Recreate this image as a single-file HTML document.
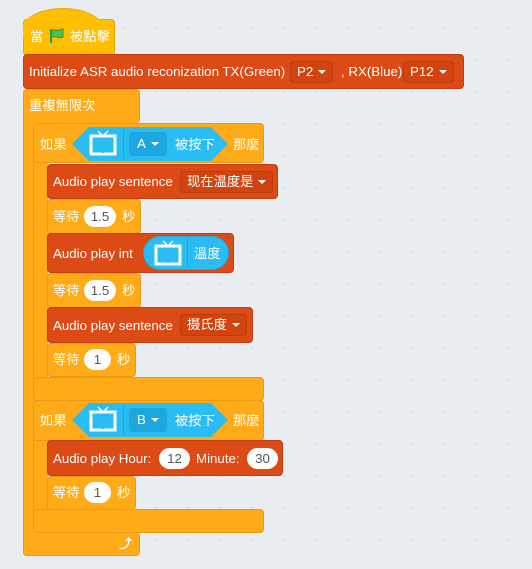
<!DOCTYPE html>
<html><head><meta charset="utf-8"><style>
*{margin:0;padding:0;box-sizing:border-box}
body{width:532px;height:569px;overflow:hidden;background:#e9edf2;background-image:radial-gradient(#d8dde4 1px,transparent 1.2px);background-size:32px 32px;background-position:12px 12px;position:relative;font-family:"Liberation Sans","Noto Sans CJK TC",sans-serif;font-size:13.3px;color:#fff}
.b{position:absolute;border-radius:4px}
.y{background:#ffab19;border:1px solid #e89a10}
.r{background:#dc4a15;border:1px solid #c23e0e}
.t{position:absolute;white-space:nowrap;line-height:16px}
.dd{position:absolute;border:1px solid #b83c0c;background:#d2440f;border-radius:4px;height:22px;line-height:20px;padding:0 6px;white-space:nowrap}
.ov{position:absolute;background:#fff;color:#555;border-radius:11px;height:21px;line-height:21px;text-align:center}
.tri{display:inline-block;width:0;height:0;border-left:4px solid transparent;border-right:4px solid transparent;border-top:4px solid #fff;vertical-align:middle;margin-left:5px}
.hex{position:absolute;background:#29bdf3}
.bdd{position:absolute;background:#1ea7de;border-radius:4px;height:24px;line-height:24px;padding:0 8px}
</style></head><body>
<!-- hat -->
<div class="b" style="left:23px;top:19px;width:92px;height:37px;background:#ffbf00;border:1px solid #e6a800;border-radius:4px"></div>
<div style="position:absolute;left:23px;top:8px;width:80px;height:30px;background:#ffbf00;border-radius:40px 40px 0 0/20px 20px 0 0;border-top:1px solid #e6a800"></div>
<div class="t" style="left:30px;top:29px">當</div>
<svg style="position:absolute;left:49px;top:28px" width="16" height="16" viewBox="0 0 16 16"><path d="M2 1v14" stroke="#3a9a3a" stroke-width="2"/><path d="M3 2c3-1 5 1 8 0s3-1 3-1v8c-2 1-4 1-6 0s-4 0-5 0z" fill="#4cbf56" stroke="#3a9a3a"/></svg>
<div class="t" style="left:70px;top:29px">被點擊</div>
<!-- init -->
<div class="b r" style="left:23px;top:54px;width:441px;height:35px"></div>
<div class="t" style="left:29px;top:64px">Initialize ASR audio reconization TX(Green)</div>
<div class="dd" style="left:290px;top:61px">P2<span class="tri"></span></div>
<div class="t" style="left:341px;top:64px">, RX(Blue)</div>
<div class="dd" style="left:403px;top:61px">P12<span class="tri"></span></div>
<!-- forever -->
<div class="b" style="left:23px;top:115px;width:12px;height:420px;background:#ffab19;border-left:1px solid #e89a10;border-radius:0"></div>
<div class="b y" style="left:23px;top:89px;width:117px;height:34px;border-bottom:none"></div>
<div class="b y" style="left:23px;top:532px;width:117px;height:24px;border-top:none"></div>
<div class="t" style="left:29px;top:98px">重複無限次</div>
<div class="t" style="left:119px;top:536px;font-size:13px;font-weight:bold">⤴</div>
<!-- if 1 -->
<div class="b" style="left:33px;top:155px;width:15px;height:225px;background:#ffab19;border-radius:0;border-left:1px solid #e89a10"></div>
<div class="b y" style="left:33px;top:123px;width:231px;height:40px"></div>
<div class="b y" style="left:33px;top:377px;width:231px;height:24px"></div>
<div class="t" style="left:40px;top:137px">如果</div>
<div class="hex" style="left:72px;top:127px;width:156px;height:34px;clip-path:polygon(17px 0,139px 0,156px 17px,139px 34px,17px 34px,0 17px)"></div>
<svg style="position:absolute;left:88px;top:130px" width="30" height="27" viewBox="0 0 30 27"><path d="M10 1l4 4M20 1l-4 4" stroke="#fff" stroke-width="1.5"/><rect x="3" y="6" width="24" height="18" fill="none" stroke="#fff" stroke-width="3"/><rect x="14" y="21" width="2" height="2" fill="#29bdf3"/></svg>
<div style="position:absolute;left:123px;top:129px;width:1px;height:30px;background:#1ea7de"></div>
<div class="bdd" style="left:129px;top:132px">A<span class="tri"></span></div>
<div class="t" style="left:175px;top:137px">被按下</div>
<div class="t" style="left:233px;top:137px">那麼</div>
<!-- sentence -->
<div class="b r" style="left:47px;top:164px;width:231px;height:35px"></div>
<div class="t" style="left:53px;top:174px">Audio play sentence</div>
<div class="dd" style="left:180px;top:171px">现在温度是<span class="tri"></span></div>
<!-- wait -->
<div class="b y" style="left:47px;top:199px;width:94px;height:35px"></div>
<div class="t" style="left:53px;top:209px">等待</div><div class="ov" style="left:84px;top:206px;width:32px">1.5</div><div class="t" style="left:122px;top:209px">秒</div>
<!-- play int -->
<div class="b r" style="left:47px;top:233px;width:187px;height:40px"></div>
<div class="t" style="left:53px;top:246px">Audio play int</div>
<div style="position:absolute;left:143px;top:236px;width:86px;height:34px;background:#29bdf3;border-radius:17px;border:1px solid #1ea7de"></div>
<svg style="position:absolute;left:153px;top:240px" width="30" height="27" viewBox="0 0 30 27"><path d="M10 1l4 4M20 1l-4 4" stroke="#fff" stroke-width="1.5"/><rect x="3" y="6" width="24" height="18" fill="none" stroke="#fff" stroke-width="3"/><rect x="14" y="21" width="2" height="2" fill="#29bdf3"/></svg>
<div style="position:absolute;left:187px;top:238px;width:1px;height:30px;background:#1ea7de"></div>
<div class="t" style="left:194px;top:246px">溫度</div>
<!-- wait -->
<div class="b y" style="left:47px;top:273px;width:94px;height:35px"></div>
<div class="t" style="left:53px;top:283px">等待</div><div class="ov" style="left:84px;top:280px;width:32px">1.5</div><div class="t" style="left:122px;top:283px">秒</div>
<!-- sentence 2 -->
<div class="b r" style="left:47px;top:307px;width:206px;height:36px"></div>
<div class="t" style="left:53px;top:318px">Audio play sentence</div>
<div class="dd" style="left:180px;top:314px">摄氏度<span class="tri"></span></div>
<!-- wait -->
<div class="b y" style="left:47px;top:343px;width:89px;height:34px"></div>
<div class="t" style="left:53px;top:352px">等待</div><div class="ov" style="left:84px;top:349px;width:27px">1</div><div class="t" style="left:117px;top:352px">秒</div>
<!-- if 2 -->
<div class="b" style="left:33px;top:432px;width:15px;height:80px;background:#ffab19;border-radius:0;border-left:1px solid #e89a10"></div>
<div class="b y" style="left:33px;top:400px;width:231px;height:41px"></div>
<div class="b y" style="left:33px;top:509px;width:231px;height:24px"></div>
<div class="t" style="left:40px;top:413px">如果</div>
<div class="hex" style="left:72px;top:403px;width:156px;height:34px;clip-path:polygon(17px 0,139px 0,156px 17px,139px 34px,17px 34px,0 17px)"></div>
<svg style="position:absolute;left:88px;top:406px" width="30" height="27" viewBox="0 0 30 27"><path d="M10 1l4 4M20 1l-4 4" stroke="#fff" stroke-width="1.5"/><rect x="3" y="6" width="24" height="18" fill="none" stroke="#fff" stroke-width="3"/><rect x="14" y="21" width="2" height="2" fill="#29bdf3"/></svg>
<div style="position:absolute;left:123px;top:405px;width:1px;height:30px;background:#1ea7de"></div>
<div class="bdd" style="left:129px;top:408px">B<span class="tri"></span></div>
<div class="t" style="left:175px;top:413px">被按下</div>
<div class="t" style="left:233px;top:413px">那麼</div>
<!-- hour -->
<div class="b r" style="left:47px;top:440px;width:236px;height:36px"></div>
<div class="t" style="left:53px;top:451px">Audio play Hour:</div>
<div class="ov" style="left:159px;top:448px;width:31px">12</div>
<div class="t" style="left:196px;top:451px">Minute:</div>
<div class="ov" style="left:247px;top:448px;width:31px">30</div>
<!-- wait -->
<div class="b y" style="left:47px;top:476px;width:89px;height:34px"></div>
<div class="t" style="left:53px;top:485px">等待</div><div class="ov" style="left:84px;top:482px;width:27px">1</div><div class="t" style="left:117px;top:485px">秒</div>
</body></html>
